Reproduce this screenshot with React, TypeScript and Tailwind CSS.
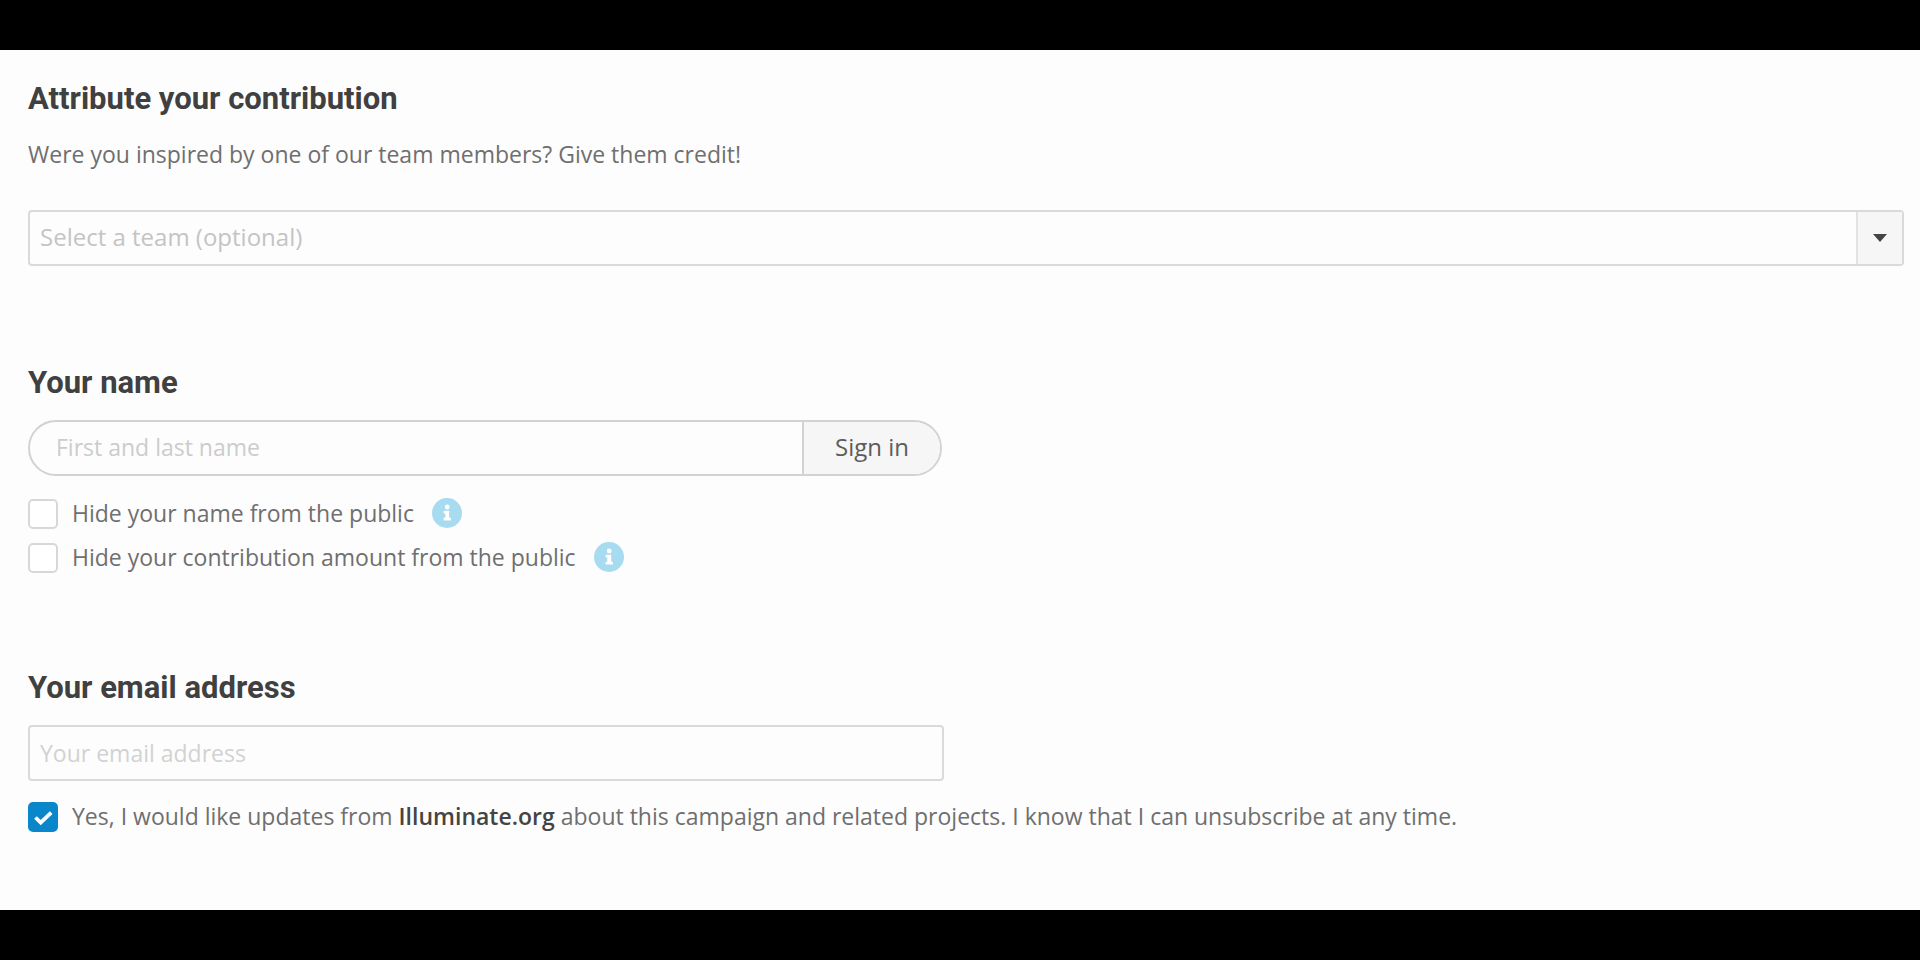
import { useState } from "react";
import type { ReactNode } from "react";

type CheckRowProps = {
  id: string;
  checked: boolean;
  onChange: (value: boolean) => void;
  info?: string;
  children: ReactNode;
};

function InfoIcon() {
  return (
    <svg viewBox="0 0 30 30" className="h-[30px] w-[30px]" aria-hidden="true">
      <circle cx="15" cy="15" r="15" fill="#a6dbf0" />
      <circle cx="15.2" cy="9" r="2.4" fill="#fff" />
      <path d="M11.6 12.8h5.6v7h1.7v2.6h-7.3v-2.6h1.7v-4.4h-1.7z" fill="#fff" />
    </svg>
  );
}

function CheckRow({ id, checked, onChange, info, children }: CheckRowProps) {
  return (
    <div className="flex min-h-11 items-center">
      <span className="grid shrink-0">
        <input
          id={id}
          type="checkbox"
          checked={checked}
          onChange={(e) => onChange(e.target.checked)}
          className="col-start-1 row-start-1 h-[30px] w-[30px] appearance-none rounded-[5px] border-2 border-[#d8d8d8] bg-white checked:border-[#0a87cb] checked:bg-[#0a87cb]"
        />
        {checked && (
          <svg viewBox="0 0 30 30" className="pointer-events-none col-start-1 row-start-1 h-[30px] w-[30px]" aria-hidden="true">
            <path d="M7.5 15.5l5.2 5.2L23.2 10.6" fill="none" stroke="#fff" strokeWidth="3.8" />
          </svg>
        )}
      </span>
      <div className="flex items-center pb-0.5">
        <label htmlFor={id} className="ml-3.5">
          {children}
        </label>
        {info && (
          <button type="button" aria-label={info} className="ml-[18px] shrink-0 rounded-full">
            <InfoIcon />
          </button>
        )}
      </div>
    </div>
  );
}

export default function App() {
  const [team, setTeam] = useState("");
  const [hideName, setHideName] = useState(false);
  const [hideAmount, setHideAmount] = useState(false);
  const [updates, setUpdates] = useState(true);

  return (
    <div className="min-h-screen bg-black py-[50px] font-['Open_Sans',sans-serif] text-[23px] leading-8 text-[#6f6f6f]">
      <form className="bg-[#fdfdfd] pt-7 pr-4 pb-[71px] pl-7" onSubmit={(e) => e.preventDefault()}>
        {/* Team */}
        <section>
          <h2 className="font-[Roboto,sans-serif] text-[31px] leading-[42px] font-bold text-[#404040]">
            Attribute your contribution
          </h2>
          <p className="mt-[18px]">Were you inspired by one of our team members? Give them credit!</p>
          <div className="mt-10 grid">
            <select
              aria-label="Team"
              value={team}
              onChange={(e) => setTeam(e.target.value)}
              className="col-start-1 row-start-1 h-14 w-full appearance-none rounded-[4px] border-2 border-[#dadada] bg-[#fdfdfd] pr-14 pb-0.5 pl-2.5 text-[24px] text-[#c4c4c4]"
            >
              <option value="">Select a team (optional)</option>
            </select>
            <span className="pointer-events-none col-start-1 row-start-1 m-0.5 flex w-[46px] items-center justify-center justify-self-end border-l-2 border-[#e2e2e2] bg-[#f6f6f6]">
              <svg viewBox="0 0 14 8" className="h-2 w-3.5" aria-hidden="true">
                <path d="M0 0h14L7 8z" fill="#444" />
              </svg>
            </span>
          </div>
        </section>

        {/* Name */}
        <section className="mt-24">
          <h2 className="font-[Roboto,sans-serif] text-[31px] leading-[42px] font-bold text-[#404040]">
            <label htmlFor="name">Your name</label>
          </h2>
          <div className="mt-4 flex h-14 w-[914px] max-w-full overflow-hidden rounded-full border-2 border-[#d2d2d2] bg-[#fdfdfd]">
            <input
              id="name"
              type="text"
              placeholder="First and last name"
              className="min-w-0 flex-1 pb-0.5 pl-[26px] placeholder:text-[#cccccc]"
            />
            <button type="button" className="w-[138px] border-l-2 border-[#d2d2d2] bg-[#f6f6f6] pb-0.5 text-[24px] text-[#5c5c5c]">
              Sign in
            </button>
          </div>
          <div className="mt-4">
            <CheckRow id="hide-name" checked={hideName} onChange={setHideName} info="About hiding your name">
              Hide your name from the public
            </CheckRow>
            <CheckRow id="hide-amount" checked={hideAmount} onChange={setHideAmount} info="About hiding your amount">
              Hide your contribution amount from the public
            </CheckRow>
          </div>
        </section>

        {/* Email */}
        <section className="mt-[87px]">
          <h2 className="font-[Roboto,sans-serif] text-[31px] leading-[42px] font-bold text-[#404040]">
            <label htmlFor="email">Your email address</label>
          </h2>
          <input
            id="email"
            type="email"
            placeholder="Your email address"
            className="mt-4 block h-14 w-[916px] max-w-full rounded-[4px] border-2 border-[#dadada] bg-[#fdfdfd] px-2.5 placeholder:text-[#d2d2d2]"
          />
          <div className="mt-3.5">
            <CheckRow id="updates" checked={updates} onChange={setUpdates}>
              Yes, I would like updates from <strong className="font-semibold text-[#444]">Illuminate.org</strong> about
              this campaign and related projects. I know that I can unsubscribe at any time.
            </CheckRow>
          </div>
        </section>
      </form>
    </div>
  );
}
